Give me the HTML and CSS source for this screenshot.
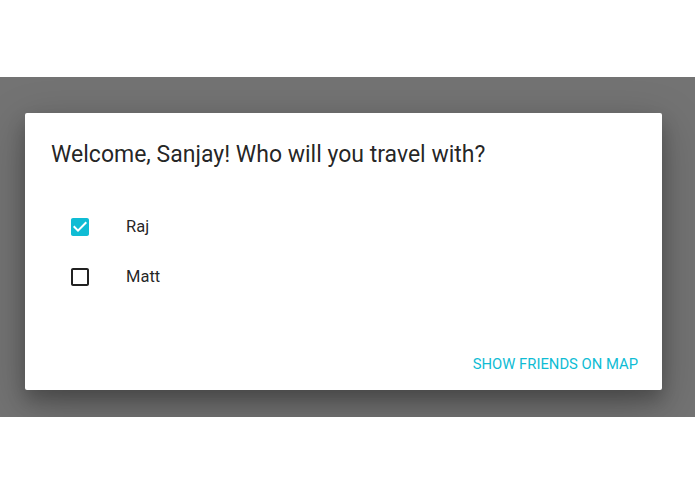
FILE: index.html
```html
<!DOCTYPE html>
<html lang="en">
<head>
<meta charset="utf-8">
<title>Travel companions</title>
<link rel="stylesheet" href="styles.css">
</head>
<body>
  <div class="stage">
    <div class="overlay">
      <div class="dialog">
        <h3 class="dialog-title">Welcome, Sanjay! Who will you travel with?</h3>
        <ul class="friends">
          <li class="friend">
            <svg class="box box-on" viewBox="0 0 24 24" width="24" height="24"><path d="M19 3H5c-1.11 0-2 .9-2 2v14c0 1.1.89 2 2 2h14c1.11 0 2-.9 2-2V5c0-1.1-.89-2-2-2zm-9 14l-5-5 1.41-1.410L10 14.17l7.59-7.59L19 8l-9 9z"/></svg>
            <span class="friend-name">Raj</span>
          </li>
          <li class="friend">
            <svg class="box box-off" viewBox="0 0 24 24" width="24" height="24"><path d="M19 5v14H5V5h14m0-2H5c-1.1 0-2 .9-2 2v14c0 1.1.9 2 2 2h14c1.1 0 2-.9 2-2V5c0-1.1-.9-2-2-2z"/></svg>
            <span class="friend-name">Matt</span>
          </li>
        </ul>
        <div class="actions">
          <button class="flat-btn" type="button">Show friends on map</button>
        </div>
      </div>
    </div>
  </div>
</body>
</html>
```

FILE: styles.css
```css
html, body {
  margin: 0;
  padding: 0;
  background: #ffffff;
}

body {
  font-family: Roboto, "Noto Sans", sans-serif;
  color: rgba(0, 0, 0, 0.87);
}

.stage {
  padding-top: 77px;
}

.overlay {
  background: #737373;
  height: 340px;
  box-sizing: border-box;
  padding: 36px 33px 27px 25px;
}

.dialog {
  background: #ffffff;
  border-radius: 2px;
  height: 277px;
  box-sizing: border-box;
  display: flex;
  flex-direction: column;
  box-shadow: rgba(0, 0, 0, 0.25) 0 14px 45px, rgba(0, 0, 0, 0.22) 0 10px 18px;
}

.dialog-title {
  margin: 0;
  padding: 26px 24px 0 26px;
  font-size: 23px;
  line-height: 32px;
  font-weight: 400;
  color: rgba(0, 0, 0, 0.87);
}

.friends {
  list-style: none;
  margin: 44px 0 0 0;
  padding: 0 0 0 43px;
  display: flex;
  flex-direction: column;
  gap: 26px;
}

.friend {
  display: flex;
  align-items: center;
  gap: 34px;
  height: 24px;
}

.box {
  display: block;
  flex: none;
}

.box-on {
  fill: #0fbcd4;
}

.box-off {
  fill: rgba(0, 0, 0, 0.87);
}

.friend-name {
  font-size: 16.5px;
  line-height: 24px;
}

.actions {
  margin-top: auto;
  padding: 8px;
  display: flex;
  justify-content: flex-end;
}

.flat-btn {
  border: none;
  background: transparent;
  font-family: Roboto, "Noto Sans", sans-serif;
  font-size: 14.8px;
  font-weight: 400;
  text-transform: uppercase;
  color: #0fbcd4;
  height: 36px;
  line-height: 36px;
  padding: 0 16px;
  margin: 0;
  border-radius: 2px;
  cursor: pointer;
}
```
